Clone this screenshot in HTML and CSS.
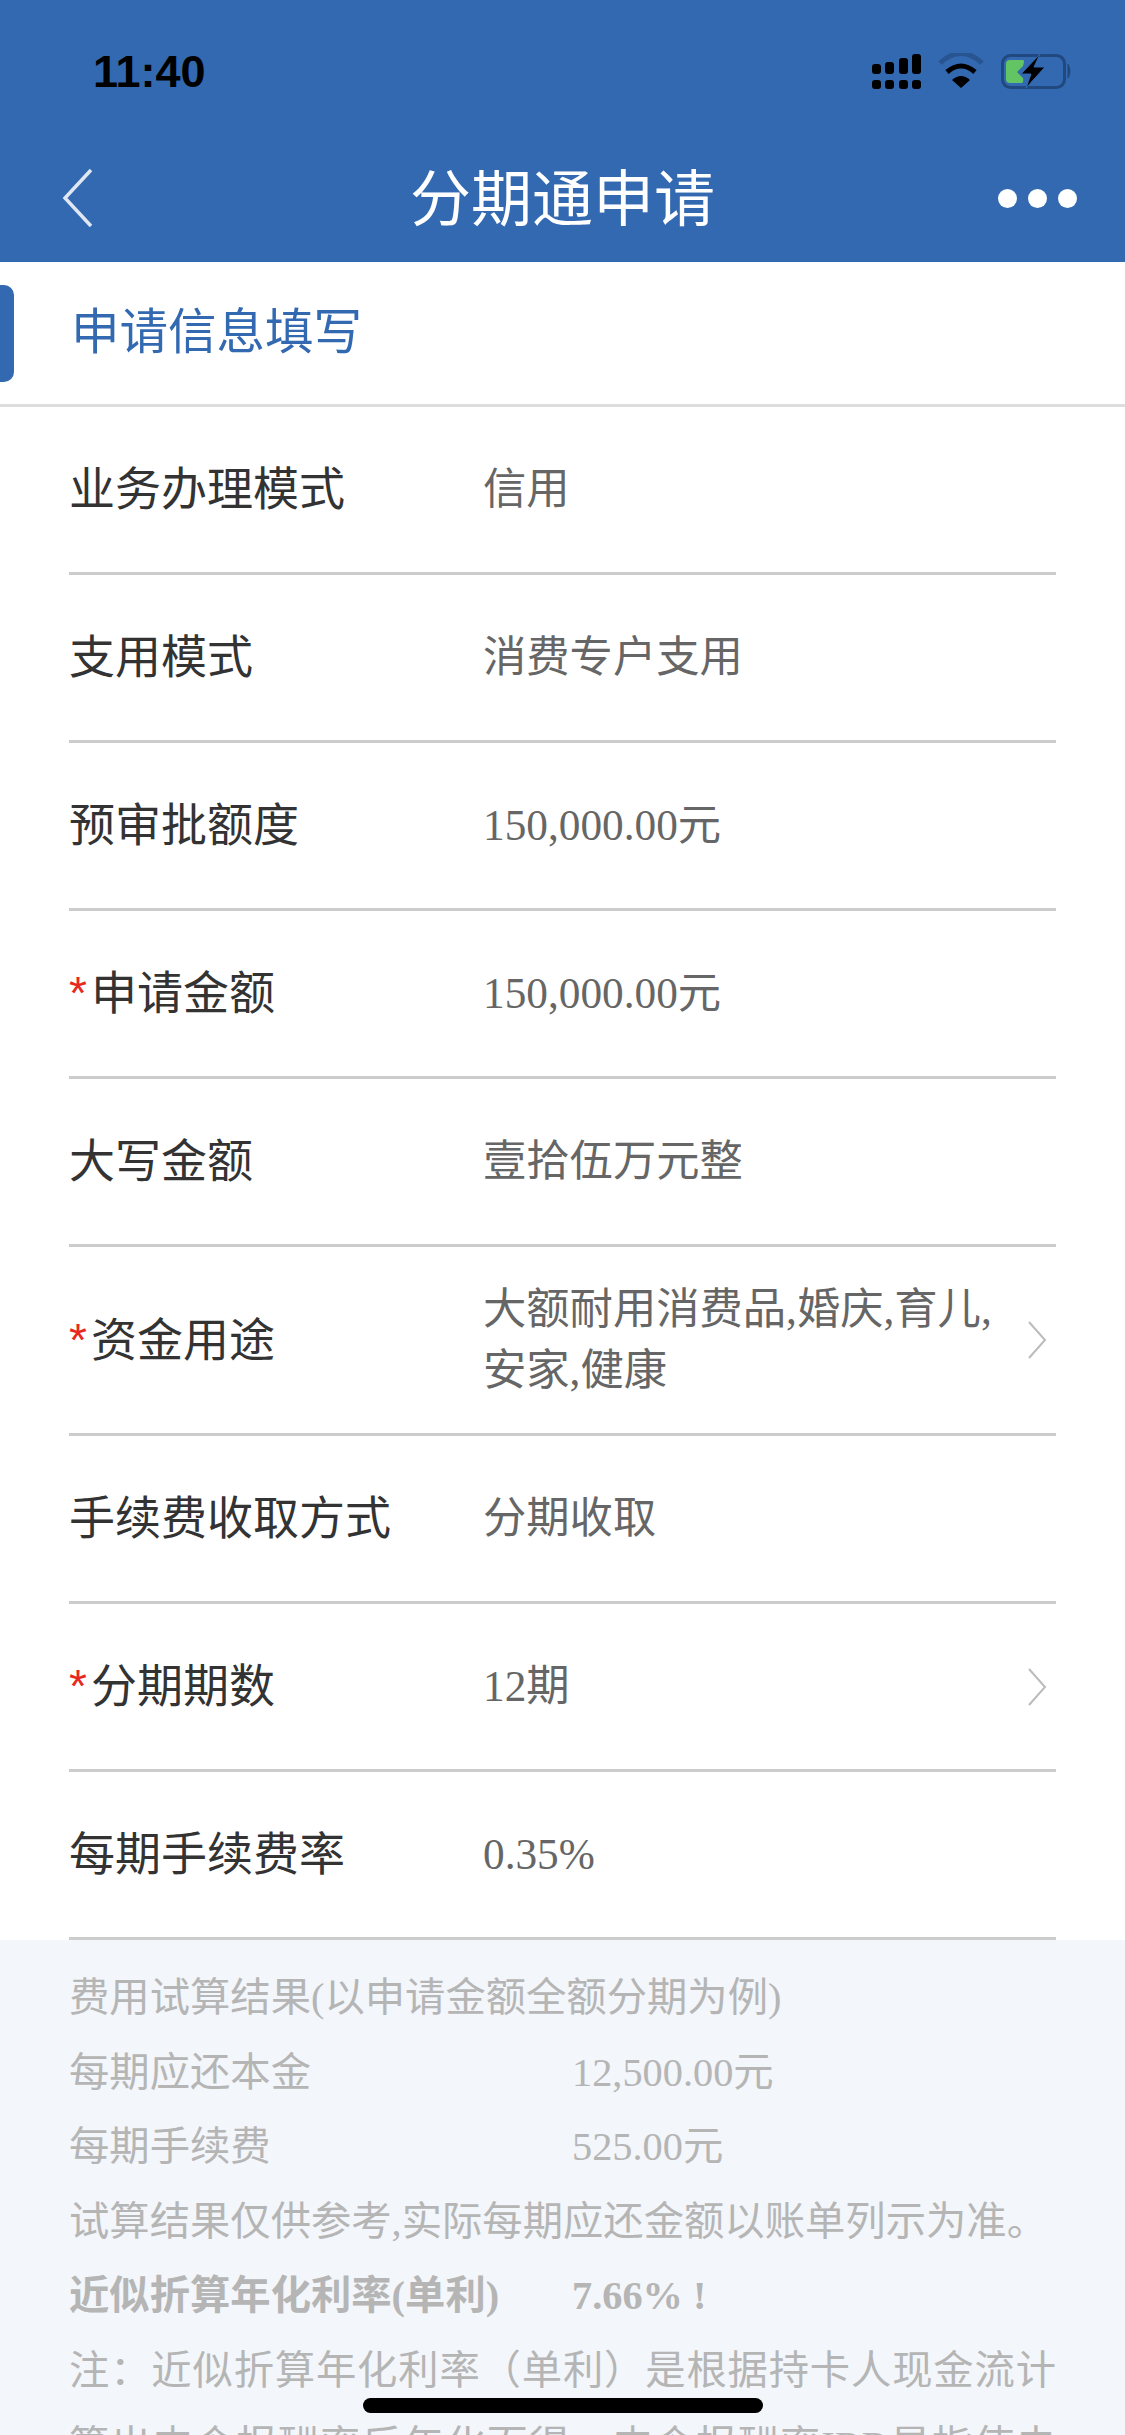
FILE: index.html
```html
<!DOCTYPE html>
<html lang="zh-CN">
<head>
  <meta charset="UTF-8" />
  <meta name="viewport" content="width=device-width, initial-scale=1.0"/>
  <title>分期通申请</title>
  <link rel="stylesheet" href="styles.css">
</head>
<body>
  <div class="page">
    <header class="top">
      <div class="status-bar">
        <span class="time">11:40</span>
        <svg class="status-icons" width="201" height="36" viewBox="872 53 201 36">
          <!-- signal -->
          <g fill="#000">
            <rect x="872" y="64" width="9" height="10" rx="3"/>
            <rect x="885" y="62" width="9" height="12" rx="3"/>
            <rect x="899" y="58" width="9" height="16" rx="3"/>
            <rect x="912" y="54" width="9" height="20" rx="3"/>
            <rect x="872" y="80" width="9" height="9" rx="3"/>
            <rect x="885" y="80" width="9" height="9" rx="3"/>
            <rect x="899" y="80" width="9" height="9" rx="3"/>
            <rect x="912" y="80" width="9" height="9" rx="3"/>
          </g>
          <!-- wifi -->
          <path d="M940 63 Q961 44 982 63" fill="none" stroke="#285590" stroke-width="5"/>
          <path d="M947 72 Q961 60 975 72" fill="none" stroke="#000" stroke-width="5"/>
          <path d="M952 80 Q961 72 970 80 L961 88 Z" fill="#000"/>
          <!-- battery -->
          <rect x="1002.5" y="55.5" width="62" height="32" rx="8" fill="none" stroke="#21497f" stroke-width="3"/>
          <path d="M1068 64 Q1072 71 1068 78 Z" fill="#21497f" stroke="#21497f" stroke-width="1"/>
          <path d="M1010 60 H1023 Q1025 60 1023 66 L1017 72 L1023 78 Q1024 83 1021 83 H1010 Q1006 83 1006 79 V64 Q1006 60 1010 60 Z" fill="#62c462"/>
          <path d="M1040 54 L1021 74 H1031 L1026 88 L1045 67 H1034 Z" fill="#000" stroke="#3269b0" stroke-width="1"/>
        </svg>
      </div>
      <nav class="nav-bar">
        <svg class="back" width="32" height="60" viewBox="0 0 32 60">
          <path d="M29 2 L3 30 L29 58" fill="none" stroke="#dfe7f2" stroke-width="3.5"/>
        </svg>
        <h1 class="nav-title">分期通申请</h1>
        <div class="more"><i></i><i></i><i></i></div>
      </nav>
    </header>

    <section class="section-head">
      <span class="tab"></span>
      <h2>申请信息填写</h2>
    </section>

    <div class="form">
      <div class="row"><div class="label">业务办理模式</div><div class="value">信用</div></div>
      <div class="row"><div class="label">支用模式</div><div class="value">消费专户支用</div></div>
      <div class="row"><div class="label">预审批额度</div><div class="value">150,000.00元</div></div>
      <div class="row"><div class="label"><em>*</em>申请金额</div><div class="value">150,000.00元</div></div>
      <div class="row"><div class="label">大写金额</div><div class="value">壹拾伍万元整</div></div>
      <div class="row row-tall">
        <div class="label"><em>*</em>资金用途</div>
        <div class="value">大额耐用消费品,婚庆,育儿,<br>安家,健康</div>
        <svg class="arrow" width="20" height="38" viewBox="0 0 20 38"><path d="M2 1 L18 19 L2 37" fill="none" stroke="#bbb" stroke-width="2"/></svg>
      </div>
      <div class="row"><div class="label">手续费收取方式</div><div class="value">分期收取</div></div>
      <div class="row">
        <div class="label"><em>*</em>分期期数</div>
        <div class="value">12期</div>
        <svg class="arrow" width="20" height="38" viewBox="0 0 20 38"><path d="M2 1 L18 19 L2 37" fill="none" stroke="#bbb" stroke-width="2"/></svg>
      </div>
      <div class="row"><div class="label">每期手续费率</div><div class="value">0.35%</div></div>
    </div>

    <section class="trial">
      <p>费用试算结果(以申请金额全额分期为例)</p>
      <p class="pair"><span>每期应还本金</span><span>12,500.00元</span></p>
      <p class="pair"><span>每期手续费</span><span>525.00元</span></p>
      <p>试算结果仅供参考,实际每期应还金额以账单列示为准。</p>
      <p class="pair strong"><span>近似折算年化利率(单利)</span><span>7.66% !</span></p>
      <p class="note">注：近似折算年化利率（单利）是根据持卡人现金流计算出内含报酬率后年化而得，内含报酬率IRR是指使未来现金流现值等于当前本金的折现率。</p>
    </section>

    <div class="home-bar"></div>
  </div>
</body>
</html>
```

FILE: styles.css
```css
* {
  box-sizing: border-box;
}

body {
  margin: 0;
  background: #fff;
  font-family: "Liberation Serif", "Noto Sans CJK SC", serif;
}

.page {
  position: relative;
  width: 1125px;
  height: 2435px;
  overflow: hidden;
  background: #fff;
}

/* header */
.top {
  height: 262px;
  background: #3269b0;
  color: #fff;
}

.status-bar {
  height: 140px;
  display: flex;
  justify-content: space-between;
  align-items: flex-start;
  padding: 53px 52px 0 93px;
}

.time {
  font-family: "Liberation Sans", sans-serif;
  font-size: 45px;
  font-weight: bold;
  line-height: 38px;
  color: #000;
}

.nav-bar {
  height: 122px;
  display: flex;
  align-items: center;
  justify-content: space-between;
  padding: 0 48px 6px 62px;
  position: relative;
}

.nav-title {
  position: absolute;
  left: 0;
  right: 0;
  top: 17px;
  margin: 0;
  text-align: center;
  font-family: "Noto Sans CJK SC", sans-serif;
  font-size: 61px;
  line-height: 76px;
  font-weight: normal;
}

.more {
  display: flex;
  gap: 11px;
}

.more i {
  display: block;
  width: 19px;
  height: 19px;
  border-radius: 50%;
  background: #fff;
}

/* section title */
.section-head {
  height: 145px;
  display: flex;
  align-items: center;
  border-bottom: 3px solid #ddd;
}

.tab {
  width: 14px;
  height: 97px;
  background: #3269b0;
  border-radius: 0 10px 10px 0;
}

.section-head h2 {
  margin: 0 0 0 57px;
  padding-bottom: 11px;
  font-family: "Noto Sans CJK SC", sans-serif;
  font-size: 48.5px;
  font-weight: normal;
  color: #3269b0;
}

/* form rows */
.form {
  padding: 0 69px;
}

.row {
  height: 168px;
  display: flex;
  align-items: center;
  border-bottom: 3px solid #ccc;
  position: relative;
}

.row-tall {
  height: 189px;
}

.label {
  width: 414px;
  flex: none;
  padding-bottom: 9px;
  font-family: "Noto Sans CJK SC", sans-serif;
  font-size: 46px;
  color: #333;
}

.label em {
  margin-right: 4px;
  font-family: "Liberation Sans", sans-serif;
  font-style: normal;
  color: #e8281e;
}

.value {
  flex: 1;
  font-size: 43.3px;
  line-height: 61px;
  color: #666;
}

.arrow {
  flex: none;
  margin-right: 9px;
}

/* trial result */
.trial {
  background: #f3f6fa;
  padding: 21px 69px 0;
  height: 500px;
  color: #b5b5b5;
  font-size: 40.35px;
  line-height: 74.6px;
}

.trial p {
  margin: 0;
}

.trial .note {
  text-align: justify;
}

.pair {
  display: flex;
}

.pair span:first-child {
  width: 503px;
}

.strong {
  font-weight: bold;
}

.home-bar {
  position: absolute;
  left: 363px;
  top: 2398px;
  width: 400px;
  height: 15px;
  border-radius: 8px;
  background: #000;
}
```
